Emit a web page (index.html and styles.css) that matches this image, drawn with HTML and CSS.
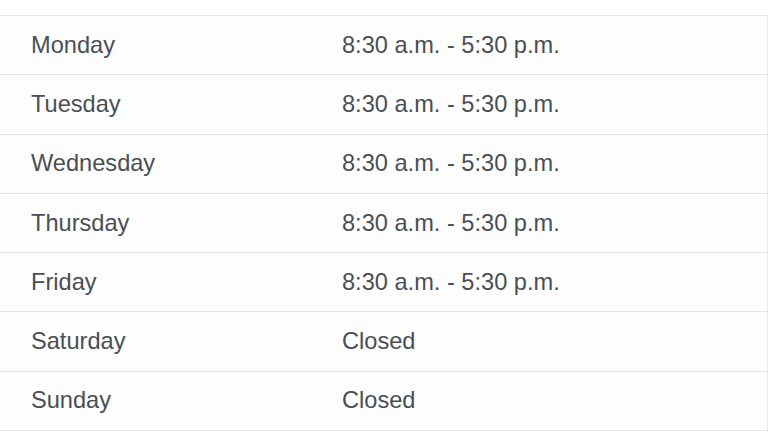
FILE: index.html
```html
<!DOCTYPE html>
<html>
<head>
<meta charset="utf-8">
<link rel="stylesheet" href="styles.css">
</head>
<body>
<table class="hours">
<tbody>
<tr><td class="day">Monday</td><td class="time">8:30 a.m. - 5:30 p.m.</td></tr>
<tr><td class="day">Tuesday</td><td class="time">8:30 a.m. - 5:30 p.m.</td></tr>
<tr><td class="day">Wednesday</td><td class="time">8:30 a.m. - 5:30 p.m.</td></tr>
<tr><td class="day">Thursday</td><td class="time">8:30 a.m. - 5:30 p.m.</td></tr>
<tr><td class="day">Friday</td><td class="time">8:30 a.m. - 5:30 p.m.</td></tr>
<tr><td class="day">Saturday</td><td class="time">Closed</td></tr>
<tr><td class="day">Sunday</td><td class="time">Closed</td></tr>
</tbody>
</table>
</body>
</html>
```
FILE: styles.css
```css
html, body {
  margin: 0;
  padding: 0;
  background: #ffffff;
}
body {
  padding-top: 15px;
  font-family: "Liberation Sans", Arial, sans-serif;
}
.hours {
  width: 768px;
  border-collapse: collapse;
  border-right: 1px solid #e9e9e9;
  background: #fdfdfd;
}
.hours td {
  border-top: 1px solid #e6e6e6;
  border-bottom: 1px solid #e6e6e6;
  height: 58.3px;
  padding: 0;
  font-size: 23.6px;
  color: #4a4f55;
  vertical-align: middle;
}
.hours .day {
  width: 311px;
  padding-left: 31px;
}
```
